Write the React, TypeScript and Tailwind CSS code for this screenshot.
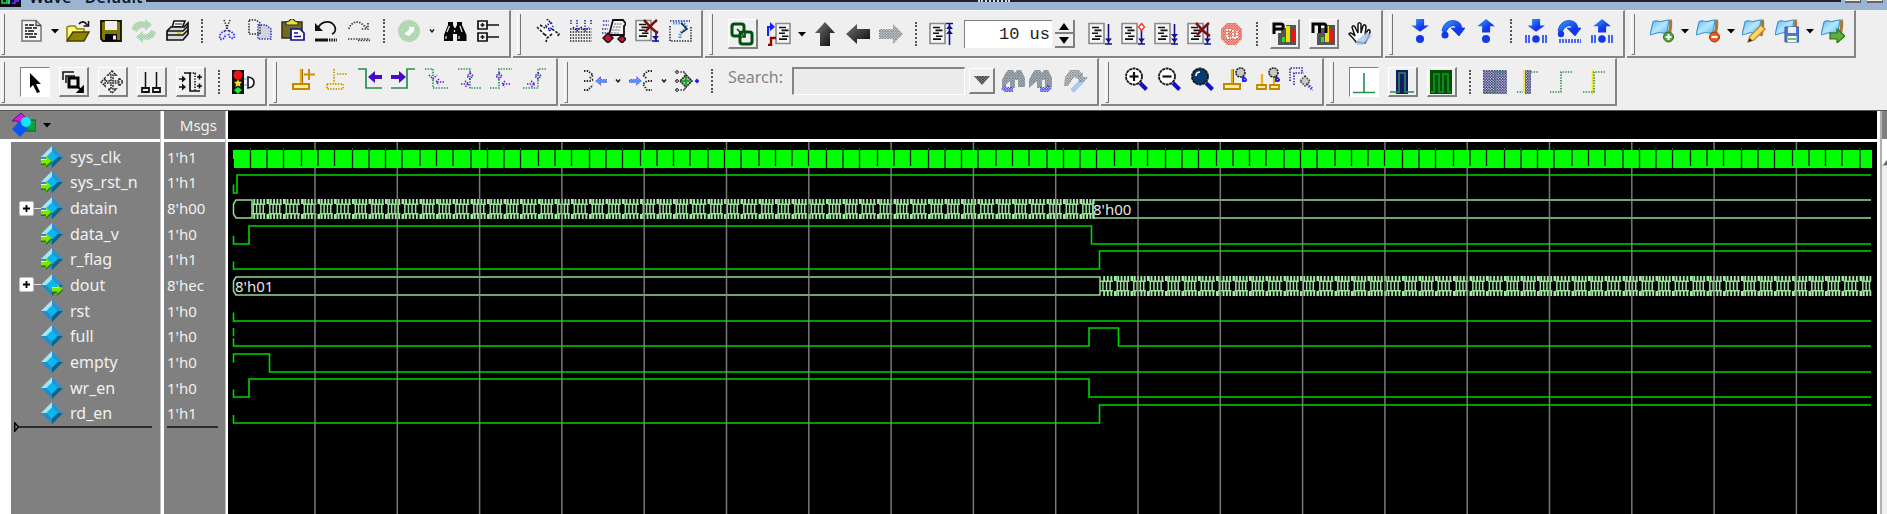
import React from "react";

type Kids = { children?: React.ReactNode };

/* ---------- toolbar building blocks ---------- */

function Pic({ children }: Kids) {
  return (
    <svg viewBox="0 0 24 24" className="h-6 w-6 shrink-0" fill="none" aria-hidden="true">
      {children}
    </svg>
  );
}

function Tool({ label, children }: Kids & { label: string }) {
  return (
    <button type="button" aria-label={label} className="flex h-6 w-[33px] shrink-0 items-center justify-center">
      <Pic>{children}</Pic>
    </button>
  );
}

function Toggle({ label, pressed = false, children }: Kids & { label: string; pressed?: boolean }) {
  return (
    <span className="flex w-[39px] shrink-0 justify-center">
      <button
        type="button"
        aria-label={label}
        aria-pressed={pressed}
        className={
          pressed
            ? "flex h-[30px] w-[30px] items-center justify-center border-t border-l border-r border-b border-t-[#808080] border-l-[#808080] border-r-white border-b-white bg-white"
            : "flex h-[30px] w-[30px] items-center justify-center border-t border-l border-r-2 border-b-2 border-t-white border-l-white border-r-[#808080] border-b-[#808080] bg-[#efefef]"
        }
      >
        <Pic>{children}</Pic>
      </button>
    </span>
  );
}

function Caret({ label, small = false }: { label: string; small?: boolean }) {
  return (
    <button type="button" aria-label={label} className="flex h-6 w-[13px] shrink-0 items-center justify-center">
      <svg viewBox="0 0 8 5" className="h-[5px] w-2" aria-hidden="true">
        {small ? <path d="M2 .5 4 3 6 .5" fill="none" stroke="#111" strokeWidth="1.4" /> : <path d="M0 0h8L4 4.6z" fill="#000" />}
      </svg>
    </button>
  );
}

function Sep() {
  return (
    <span className="flex w-[17px] shrink-0 justify-center">
      <span className="h-6 border-l-2 border-dotted border-[#555]" />
    </span>
  );
}

function Group({ label, children }: Kids & { label: string }) {
  return (
    <div
      role="toolbar"
      aria-label={label}
      className="flex h-12 shrink-0 items-start border-t border-r-2 border-b-2 border-t-white border-r-[#858585] border-b-[#858585] bg-[#efefef] pr-[5px]"
    >
      <span className="mt-[3px] mr-[10px] ml-1 h-[41px] w-1 border-r-[1px] border-b-[1px] border-l border-[#777] border-l-white" />
      <div className="mt-2 flex items-center">{children}</div>
    </div>
  );
}

/* ---------- icon parts ---------- */

const DOT = "1.4 1.3";

function Lines({ x = 4, y = 6 }: { x?: number; y?: number }) {
  return (
    <g transform={`translate(${x} ${y})`} stroke="#111" strokeWidth="1.6">
      <path d="M0 0h7M2.500 2.900h7M0 5.800h6M3 8.700h6.500M0 11.600h8" />
    </g>
  );
}

function Sheet() {
  return (
    <>
      <path d="M1 1.500h15v20H1z" fill="#f4f4f4" stroke="#8a8a8a" strokeWidth="1.600" />
      <Lines x={4} y={5.5} />
    </>
  );
}

const NAVY = "#10108c";

function RunArrow({ double = false }: { double?: boolean }) {
  return (
    <g stroke={NAVY} strokeWidth="1.600">
      <path d="M20.500 2v20M17 22h7" />
      <path d="M17 16.500h7l-3.500 4z" fill={NAVY} stroke="none" />
      {double && <path d="M17 12h7l-3.500 4z" fill={NAVY} stroke="none" />}
    </g>
  );
}

function Cross() {
  return <path d="M9 1c3 3 8 10 14 13M22 1c-4 3-8 8-12 12" stroke="#7c1010" strokeWidth="2.600" />;
}

function Scissors() {
  return (
    <>
      <path d="M9 1l5 12M15 1l-5 12" stroke="#222" strokeWidth="1.500" strokeDasharray={DOT} />
      <path d="M10 12c-4 1-6 4-5 8 3 1 5-1 5.500-5M14 12c4 1 6 4 5 7-3 1-5-1-5.500-4" stroke="#2a2af0" strokeWidth="1.900" strokeDasharray={DOT} />
    </>
  );
}

function Printer() {
  return (
    <>
      <path d="M7 9 9 2h11l-3 7z" fill="#fff" stroke="#111" strokeWidth="1.600" />
      <path d="M10 5h7M9 7.500h7" stroke="#111" />
      <path d="M2 12l4-4h13l4-4v11l-5 6H2z" fill="#d8d8d8" stroke="#111" strokeWidth="1.700" />
      <path d="M2 12h16l5-5M2 16h16l5-5" stroke="#111" strokeWidth="1.500" />
      <path d="M12 14h4" stroke="#d8c800" strokeWidth="1.800" />
    </>
  );
}

function Binoculars() {
  return (
    <>
      <path d="M5 3h5v3l1.500 3h1L14 6V3h5v3l4.500 10v6H14v-7h-4v7H1v-6L5 6z" fill="#050505" />
      <path d="M6.500 7 4 13M17 7l2 6M3 17v3M16 17v3M11.500 11v2" stroke="#e8e8e8" strokeWidth="1.200" />
    </>
  );
}

function GreyBinoculars() {
  const shape = "M4 5l3-4h5l2 3 2-3h4l4 8v9h-7v-7h-3v8H9v-7l-8 7V11z";
  return (
    <>
      <path d={shape} fill="#c4ccd4" />
      <path d={shape} fill="url(#chk-grey)" />
    </>
  );
}

function Magnifier({ sign, fill = "#fff" }: { sign?: "plus" | "minus"; fill?: string }) {
  return (
    <>
      <path d="M16 16l6.500 6.500" stroke="#1010c8" strokeWidth="4" />
      <circle cx="10" cy="9.500" r="8" fill={fill} stroke="#151515" strokeWidth="1.800" strokeDasharray="3 .6" />
      {sign && <path d="M5.500 9.500h9" stroke="#111" strokeWidth="2.200" />}
      {sign === "plus" && <path d="M10 5v9" stroke="#111" strokeWidth="2.200" />}
      {!sign && <path d="M6 9c0-3 2-4 4-4" stroke="#fff" strokeWidth="1.600" />}
    </>
  );
}

const GOLD = "#e8b010";

function CursorBase() {
  return (
    <>
      <path d="M9 2v15" stroke={GOLD} strokeWidth="2.400" />
      <path d="M10.500 2v15" stroke="#a06000" />
      <path d="M1 17h16v5H1z" fill="#fff0a0" stroke="#c48800" strokeWidth="2" />
    </>
  );
}

function MiniLens() {
  return (
    <>
      <path d="M20 9v5l3 0M21 10l3 4" stroke="#2828f0" strokeWidth="2" />
      <circle cx="17.500" cy="5.500" r="4.500" fill="#c8c8c8" stroke="#222" strokeWidth="1.600" strokeDasharray="2 .7" />
    </>
  );
}

const EDGE = "#249050";

function StepDown() {
  return <path d="M7 0h10v8h6L12 16 1 8h6z" fill="url(#blue)" transform="translate(2.500 0) scale(.8)" />;
}
function StepOver() {
  return (
    <path
      d="M1 12C2 4 9 0 15 2c4 1 5.500 4 5.800 7H24l-6 8-8-8h5c-1-4-7-3-10 4z"
      fill="url(#blue)"
      stroke="#0838d0"
      strokeWidth=".7"
    />
  );
}
function StepUp() {
  return <path d="M7 17h10V9h6L12 0 1 9h6z" fill="url(#blue)" transform="translate(2.500 0) scale(.8)" />;
}
function Bars() {
  return <path d="M2 16v8M5 16v8M19 16v8M22 16v8" stroke="#1840f0" strokeWidth="1.600" />;
}

function Flag() {
  return (
    <>
      <path d="M20 1c2 3 0 9-1 16" stroke="#a87838" strokeWidth="3.200" />
      <path d="M3 3c4-3 7 1 10-1l6-1-2 12c-4 3-7-1-10 1l-7 2z" fill="url(#sky)" stroke="#4094d0" strokeWidth="1.200" />
    </>
  );
}

function Chart({ x, y }: { x: number; y: number }) {
  return (
    <g transform={`translate(${x} ${y})`}>
      <path d="M0 8h3V3h5V0h10v20H0z" fill="#555" />
      <path d="M4 12h3v5H4z" fill="#20e020" />
      <path d="M8 1h4v16H8z" fill="#f0e000" />
      <path d="M13 4h4v13h-4z" fill="#f01010" />
    </g>
  );
}

/* ---------- signals ---------- */

type Signal = { name: string; value: string; dir: "in" | "out" | "none"; bus?: boolean };

const signals: Signal[] = [
  { name: "sys_clk", value: "1'h1", dir: "in" },
  { name: "sys_rst_n", value: "1'h1", dir: "in" },
  { name: "datain", value: "8'h00", dir: "in", bus: true },
  { name: "data_v", value: "1'h0", dir: "in" },
  { name: "r_flag", value: "1'h1", dir: "in" },
  { name: "dout", value: "8'hec", dir: "out", bus: true },
  { name: "rst", value: "1'h0", dir: "none" },
  { name: "full", value: "1'h0", dir: "none" },
  { name: "empty", value: "1'h0", dir: "none" },
  { name: "wr_en", value: "1'h0", dir: "none" },
  { name: "rd_en", value: "1'h1", dir: "none" },
];

function SignalIcon({ dir }: { dir: Signal["dir"] }) {
  return (
    <svg viewBox="0 0 22 22" className="h-[22px] w-[22px] shrink-0" aria-hidden="true">
      <path d="M11 0v5.500L5.500 11H0z" fill="#a4e6f6" />
      <path d="M11 0l11 11h-5.500L11 5.500z" fill="#2494d4" />
      <path d="M0 11h5.500l5.500 5.500V22z" fill="#1c90cc" />
      <path d="M22 11 11 22v-5.500l5.500-5.500z" fill="#08648c" />
      <path d="M11 5.500l5.500 5.500-5.500 5.500L5.500 11z" fill="#08b8f4" />
      {dir !== "none" && (
        <g transform={dir === "in" ? "translate(0 10)" : "translate(11 10)"}>
          <path d="M0 4h5V.500L11 6l-6 6V9H0z" fill="#207800" />
          <path d="M0 3h5V0l5.500 5-5.500 5V7.500H0z" fill="#7ce800" />
          <path d="M0 3.500h6" stroke="#e8ffc0" />
        </g>
      )}
    </svg>
  );
}

/* ---------- waveform drawing ---------- */

const START = 233;
const END = 1871;
const mid = (row: number) => 158 + 25.6 * row;
const high = (row: number) => Math.round(mid(row) - 9);
const low = (row: number) => Math.round(mid(row) + 9);

const phase = (k: number) => (k + 0.9) % 6.8 < 3.4;
const edges: { x: number; up: boolean }[] = [];
for (let k = 0, x = 250; x < END; k++) {
  edges.push({ x, up: phase(k) });
  x += phase(k) === phase(k + 1) ? 16.5 : 18;
}

function level(row: number, startHigh: boolean, toggles: number[]) {
  let up = startHigh;
  let d = up ? `M${START + 0.5} ${mid(row)}V${high(row)}` : `M${START + 0.5} ${mid(row) + 1}V${low(row)}`;
  for (const t of toggles) {
    up = !up;
    d += `H${t}V${up ? high(row) : low(row)}`;
  }
  return d + `H${END}`;
}

function busCells(row: number, from: number, to: number) {
  const t = high(row) - 1;
  const b = low(row) + 1;
  let ticks = "";
  let inner = "";
  const starts = edges.map((e) => e.x).filter((x) => x > from - 15 && x < to);
  starts.forEach((s, i) => {
    const width = (starts[i + 1] ?? s + 16.5) - s;
    for (let n = 0; n < 5; n++) {
      const x = s + (n * width) / 5;
      if (x >= from && x < to) {
        const w = n === 0 ? 2.8 : 1.9;
        ticks += `M${x} ${t}h${w}v5h${-w}zM${x} ${b - 5}h${w}v5h${-w}z`;
      }
      const m = x + 2.6;
      if (n < 4 && m >= from && m < to) inner += `M${m} ${t + 5}h1.500v${b - t - 10}h-1.500z`;
    }
    const l = Math.max(from, s + 2);
    const r = Math.min(to, s + width - 1);
    if (r > l) inner += `M${l} ${t + 4.5}H${r}v1.500H${l}zM${l} ${b - 6}H${r}v1.500H${l}z`;
  });
  return (
    <>
      <path d={ticks} fill="#a4eca4" />
      <path d={inner} fill="#98e098" />
    </>
  );
}

function Waves() {
  const gridLines = Array.from({ length: 19 }, (_, n) => 315 + 82.3 * n);
  const cHigh = high(0) + 1;
  const cLow = low(0) + 1;
  return (
    <svg
      viewBox="228 142 1649 372"
      className="h-[372px] w-[1649px] shrink-0"
      role="img"
      aria-label="Signal waveforms"
      fill="none"
      fontFamily='"Noto Sans", sans-serif'
      fontSize="15"
    >
      <g stroke="#00d400" strokeWidth="1.600">
        <path d={level(1, false, [237])} />
        <path d={level(3, false, [249, 1091.5])} />
        <path d={level(4, false, [1099.5])} />
        <path d={level(6, false, [])} />
        <path d={level(7, false, [1089, 1118.5])} />
        <path d={`M${START + 0.5} ${high(7)}V${mid(7) - 1}`} />
        <path d={level(8, true, [269.5])} />
        <path d={level(9, false, [249, 1089])} />
        <path d={level(10, false, [1099.5])} />
      </g>
      <g stroke="#94dc94" strokeWidth="1.500">
        <path d={`M236 ${high(2)}H252V${low(2)}H236L233.500 ${low(2) - 4}V${high(2) + 4}z`} />
        <path d={`M${END} ${high(2)}H1093V${low(2)}H${END}`} />
        <path d={`M1100 ${high(5)}H236L233.500 ${high(5) + 4}V${low(5) - 4}L236 ${low(5)}H1100z`} />
      </g>
      {busCells(2, 252, 1093)}
      {busCells(5, 1100, END)}
      <g stroke="#8c8c8c" strokeWidth="1.500" strokeOpacity=".85">
        {gridLines.map((x) => (
          <path key={x} d={`M${x} 142V514`} />
        ))}
      </g>
      <path d={`M${START} ${cHigh}H${END + 1}V${cLow}H${START + 1}v-9h-1z`} fill="#00ff00" />
      {edges.map((e, i) => (
        <g key={i}>
          <path d={e.up ? `M${e.x + 0.5} ${cHigh}V${cLow}` : `M${e.x + 0.5} ${cHigh}V${cLow - 2}`} stroke="#001c00" strokeWidth="1.300" />
          {e.up && <path d={`M${e.x} ${cHigh - 1}h1`} stroke="#00a000" strokeWidth="1.500" />}
        </g>
      ))}
      <text x="1093" y="215" fill="#e6e6e6">
        8'h00
      </text>
      <text x="235" y="292" fill="#e6e6e6">
        8'h01
      </text>
    </svg>
  );
}

function Patterns() {
  const checks: [string, string][] = [
    ["chk-green", "#88c488"],
    ["chk-grey", "#6c7680"],
    ["chk-red", "#e83820"],
    ["chk-navy", "#202070"],
    ["chk-blue", "#2828e8"],
    ["chk-dark", "#222222"],
  ];
  return (
    <svg className="absolute h-0 w-0" aria-hidden="true">
      <defs>
        {checks.map(([id, color]) => (
          <pattern key={id} id={id} width="2.700" height="2.700" patternUnits="userSpaceOnUse">
            <path d="M0 0h1.500v1.500H0zM1.350 1.350h1.500v1.500h-1.500z" fill={color} />
          </pattern>
        ))}
        <linearGradient id="blue" x1="0" y1="0" x2="1" y2="1">
          <stop offset="0" stopColor="#38a8f8" />
          <stop offset=".6" stopColor="#1438f0" />
        </linearGradient>
        <linearGradient id="sky" x1="0" y1="0" x2="1" y2="1">
          <stop offset="0" stopColor="#60b4ec" />
          <stop offset=".5" stopColor="#b4e8ff" />
          <stop offset="1" stopColor="#50b0e8" />
        </linearGradient>
        <linearGradient id="steel" x1="0" y1="0" x2="1" y2="1">
          <stop offset="0" stopColor="#777" />
          <stop offset="1" stopColor="#080808" />
        </linearGradient>
      </defs>
    </svg>
  );
}

function TopTools() {
  return (
    <div className="-ml-[3px] flex gap-0.5">
      <Group label="Standard">
        <Tool label="New">
          <path d="M2 1.500h14l5 5v15.500H2z" fill="#f6f6f6" stroke="#777" strokeWidth="1.500" />
          <path d="M16 1.500v5h5" stroke="#444" strokeWidth="1.300" />
          <path d="M5 6h3m1 0h5M5 9h7m1 0h4M5 12h2m1 0h6M5 15h8m1 0h3M5 18h3m1 0h7" stroke="#111" strokeWidth="1.600" />
        </Tool>
        <Caret label="New options" />
        <Tool label="Open">
          <path d="M1 21V8l3-1h5l2 3h7v3" fill="#fff880" stroke="#908800" strokeWidth="1.600" />
          <path d="M1 22l6-9h16l-5 9z" fill="#8c8400" stroke="#484000" strokeWidth="1.500" />
          <path d="M13 5c2-3 6-3 8 1M22.500 2v5h-5" stroke="#111" strokeWidth="1.600" />
        </Tool>
        <Tool label="Save">
          <path d="M2 2h20v20H4l-2-2z" fill="#807800" stroke="#111" strokeWidth="1.800" />
          <path d="M6 2h12v9H6z" fill="#efefef" />
          <path d="M6 15h12v7H6z" fill="#050505" />
          <path d="M14 16.500h3v4h-3z" fill="#eee" />
        </Tool>
        <Tool label="Reload">
          <path d="M0 10c1-7 8-9 13-7V0l7 6-7 6V9c-4-1-7 1-8 4zM24 13c-1 7-8 9-13 7v4l-7-6 7-6v3c4 1 7-1 8-4z" fill="url(#chk-green)" />
        </Tool>
        <Tool label="Print">
          <Printer />
        </Tool>
        <Sep />
        <Tool label="Cut">
          <Scissors />
        </Tool>
        <Tool label="Copy">
          <path d="M1 1h7l4 3v11H1z" stroke="#222" strokeWidth="1.500" strokeDasharray={DOT} />
          <path d="M10 6h8l5 4v10H10z" fill="url(#chk-navy)" fillOpacity=".25" stroke="#2828b8" strokeWidth="1.500" strokeDasharray={DOT} />
        </Tool>
        <Tool label="Paste">
          <path d="M1 3h20v16H1z" fill="#706c28" stroke="#333010" strokeWidth="1.500" />
          <path d="M5 6V3l3-1 2-2h2l2 2 3 1v3z" fill="#e8e030" stroke="#333" strokeWidth="1.200" />
          <path d="M10 10h9l4 4v7H10z" fill="#fff" stroke="#101088" strokeWidth="1.700" />
          <path d="M13 14h4M13 17.500h7" stroke="#101088" strokeWidth="1.400" />
        </Tool>
        <Tool label="Undo">
          <path d="M4 9c4-8 14-8 17-1 1 3 0 6-3 7" stroke="#111" strokeWidth="1.800" />
          <path d="M1 4v8h8z" fill="#111" />
          <path d="M1 21h13" stroke="#111" strokeWidth="3" />
          <path d="M15 21h8" stroke="#111" strokeWidth="3" strokeDasharray="1.400 1" />
        </Tool>
        <Tool label="Redo">
          <path d="M2 10c1-6 9-10 14-4l4 3M21 4v6h-7" stroke="#333" strokeWidth="1.700" strokeDasharray={DOT} />
          <path d="M1 20h22" stroke="#333" strokeWidth="1.600" strokeDasharray={DOT} />
          <path d="M11 21.500h12" stroke="#333" strokeWidth="1.400" strokeDasharray={DOT} />
        </Tool>
        <Sep />
        <Tool label="Add">
          <circle cx="12" cy="12" r="11" fill="url(#chk-green)" />
          <circle cx="12" cy="12" r="8" fill="#b0deb0" fillOpacity=".4" />
          <path d="M7 15l5-4V8h5v4l-5 5z" fill="#fff" />
        </Tool>
        <Caret label="Add options" small />
        <Tool label="Find">
          <Binoculars />
        </Tool>
        <Tool label="Expand tree">
          <path d="M2 2h9v8H2zM2 14h9v8H2z" fill="#f4f4f4" stroke="#111" strokeWidth="1.700" />
          <path d="M6.500 4v4M4.500 6h4M6.500 16v4M4.500 18h4M11 6h12M11 18h12" stroke="#111" strokeWidth="1.500" />
        </Tool>
      </Group>

      <Group label="Compile">
        <Tool label="Compile">
          <path d="M4 8l8-6 11 12-2 4-5-4-6 9-9-13z" fill="#fff" fillOpacity=".8" />
          <path d="M1 8l9 9M4 6l5 3M8 15l3 2M16 10l7 5-2 3M16 15l-5 4-1 4" stroke="#222" strokeWidth="1.700" strokeDasharray="2.800 1.300" />
          <path d="M11 0l4 4-6 3 6 4M13 12l4-5" stroke="#1818a0" strokeWidth="2" strokeDasharray={DOT} />
        </Tool>
        <Tool label="Compile all">
          <path d="M1 10h22M1 13h22M1 16h22M1 19h22M1 22h22" stroke="#222" strokeWidth="1.500" strokeDasharray={DOT} />
          <path d="M2 1v5M8 1v11M16 1v11M22 1v5M4 8l4 4 4-4M12 8l4 4 4-4" stroke="#1818a0" strokeWidth="1.500" strokeDasharray={DOT} />
        </Tool>
        <Tool label="Simulate">
          <path d="M11 1h10l3 4-2 2v9H7z" fill="#f4f4f4" stroke="#111" strokeWidth="1.800" />
          <path d="M12 5h8M11 8h8M10 11h8M9 14h8" stroke="#667" strokeWidth="1.200" strokeDasharray="2 .8" />
          <path d="M1 2h6M1 6h6M0 10h6M0 14h4" stroke="#2828a8" strokeWidth="1.300" strokeDasharray={DOT} />
          <path d="M6 14l5 5-5 5-5-5zM20 16l4 4-4 4-4-4z" fill="#d01030" stroke="#111" strokeWidth="1.500" />
        </Tool>
        <Tool label="Break">
          <Sheet />
          <Cross />
          <path d="M21 14v9M17 22h7" stroke={NAVY} strokeWidth="1.600" />
          <path d="M17 17h7l-3.500 4z" fill={NAVY} />
        </Tool>
        <Tool label="Restart">
          <path d="M2 7v15h21V7" stroke="#222" strokeWidth="1.500" strokeDasharray={DOT} />
          <path d="M2 2h20" stroke="#1818a0" strokeWidth="1.500" strokeDasharray={DOT} />
          <path d="M5 4h7c7 0 8 6 3 8-3 2-3 4-3 8" stroke="#2898f0" strokeWidth="3" strokeDasharray={DOT} />
          <path d="M13 4l6 6-6 4" stroke="#222" strokeWidth="1.500" />
        </Tool>
      </Group>

      <Group label="Simulate">
        <Toggle label="Environment">
          <rect x="2" y="2" width="12" height="12" rx="2.500" stroke="#005010" strokeWidth="3" />
          <rect x="10" y="10" width="12" height="12" rx="2.500" fill="#efefef" stroke="#005010" strokeWidth="3" />
          <path d="M7 7l8 8M15 10v5h-5" stroke="#005010" strokeWidth="1.700" />
        </Toggle>
        <Tool label="Run to source">
          <path d="M9 1.500h14v20H9z" fill="#f4f4f4" stroke="#8a8a8a" strokeWidth="1.600" />
          <Lines x={12} y={5.5} />
          <path d="M1 14V5h3" stroke="#1020ff" strokeWidth="2.200" />
          <path d="M3 0l5 5-5 4z" fill="#1020ff" />
          <path d="M1 23h3v-7h5" stroke="#900" strokeWidth="2.400" />
        </Tool>
        <Caret label="Source options" />
        <Tool label="Up">
          <path d="M12 0l10 11h-5v13H7V11H2z" fill="url(#steel)" />
        </Tool>
        <Tool label="Back">
          <path d="M0 12L11 2v5h13v10H11v5z" fill="url(#steel)" />
        </Tool>
        <Tool label="Forward">
          <path d="M24 12L14 2v5H0v10h14v5z" fill="url(#chk-grey)" />
        </Tool>
        <Sep />
        <Tool label="Restart simulation">
          <Sheet />
          <path d="M20.500 1v22M17 1.500h7" stroke={NAVY} strokeWidth="1.600" />
          <path d="M17 7l3.500-4L24 7zM17 12l3.500-4 3.500 4z" fill={NAVY} />
        </Tool>
        <div className="flex h-7 w-[126px] items-center pl-[7px]">
          <input
            aria-label="Run length"
            defaultValue="10 us"
            className="h-7 w-[88px] border-t border-l border-[#808080] bg-white pr-0.5 text-right font-['Liberation_Mono',monospace] text-[17px] text-[#222] outline-none"
          />
          <span className="ml-[3px] flex w-5 flex-col">
            <button type="button" aria-label="Increase" className="flex h-3.5 items-center justify-center border-r-2 border-b-2 border-[#808080]">
              <svg viewBox="0 0 10 7" className="h-[7px] w-2.5" aria-hidden="true">
                <path d="M5 0l5 7H0z" fill="#000" />
              </svg>
            </button>
            <button type="button" aria-label="Decrease" className="flex h-3.5 items-center justify-center border-r-2 border-b-2 border-[#808080]">
              <svg viewBox="0 0 10 7" className="h-[7px] w-2.5" aria-hidden="true">
                <path d="M0 0h10L5 7z" fill="#000" />
              </svg>
            </button>
          </span>
        </div>
        <Tool label="Run">
          <Sheet />
          <RunArrow />
        </Tool>
        <Tool label="Continue run">
          <Sheet />
          <RunArrow />
          <path d="M20.500 1.500l3 3.500-3 3.500-3-3.500z" fill="#fff" stroke="#ff3020" strokeWidth="1.400" />
        </Tool>
        <Tool label="Run all">
          <Sheet />
          <RunArrow double />
        </Tool>
        <Tool label="Stop run">
          <Sheet />
          <RunArrow />
          <Cross />
        </Tool>
        <Tool label="Halt">
          <path d="M7 1h9l6 6v10l-6 6H7l-6-6V7z" fill="url(#chk-red)" />
          <path d="M11 8H7v8h4M13 8v8h4V9" stroke="#fff" strokeWidth="1.800" strokeDasharray="2 1" />
        </Tool>
        <Sep />
        <Toggle label="Performance profiling">
          <Chart x={6} y={3} />
          <path d="M2 12V2h7c3 0 3 5 0 5H3" stroke="#050505" strokeWidth="3" />
        </Toggle>
        <Toggle label="Memory profiling">
          <Chart x={6} y={3} />
          <path d="M2 11V2h11c2 0 2 1 2 3v6M8.500 2v9" stroke="#050505" strokeWidth="3" />
        </Toggle>
        <Tool label="Pan">
          <path
            d="M8 20c-2-3-5-6-7-8 1-2 3-1 6 2L4 5c1-2 3-1 3 0l3 6V2c1-2 3-1 3 0v9l2-7c1-2 3-1 3 1l-1 8 3-5c2-1 2 1 2 2-1 4-3 8-5 11z"
            fill="#fff"
            stroke="#111"
            strokeWidth="1.500"
          />
          <path d="M19 10l5 4-9 9H9l-1-4z" fill="#a8c4ec" fillOpacity=".8" />
        </Tool>
      </Group>

      <Group label="Step">
        <Tool label="Step into">
          <StepDown />
          <circle cx="12" cy="20" r="4" fill="#1438e8" />
        </Tool>
        <Tool label="Step over">
          <StepOver />
          <circle cx="4" cy="16" r="3.500" fill="#1438e8" />
        </Tool>
        <Tool label="Step out">
          <StepUp />
          <circle cx="12" cy="20" r="4" fill="#1438e8" />
        </Tool>
        <Sep />
        <Tool label="Step into current">
          <StepDown />
          <Bars />
          <circle cx="12" cy="20" r="3.800" fill="#1438e8" />
        </Tool>
        <Tool label="Step over current">
          <StepOver />
          <circle cx="4" cy="15" r="3.200" fill="#1438e8" />
          <path d="M3 20v4M6 20v4M9 20v4M12 20v4M15 20v4M18 20v4M21 20v4M24 20v4" stroke="#1840f0" strokeWidth="1.500" />
        </Tool>
        <Tool label="Step out current">
          <StepUp />
          <Bars />
          <circle cx="12" cy="20" r="3.800" fill="#1438e8" />
        </Tool>
      </Group>

      <Group label="Bookmarks">
        <Tool label="Add bookmark">
          <Flag />
          <circle cx="18.500" cy="18" r="5" fill="#58a040" stroke="#2c6820" />
          <path d="M18.500 15v6M15.500 18h6" stroke="#fff" strokeWidth="2" />
        </Tool>
        <Caret label="Add bookmark options" />
        <Tool label="Remove bookmark">
          <Flag />
          <circle cx="18.500" cy="18" r="5" fill="#e85820" stroke="#a83008" />
          <path d="M15.500 18h6" stroke="#fff" strokeWidth="2.200" />
        </Tool>
        <Caret label="Remove bookmark options" />
        <Tool label="Edit bookmark">
          <Flag />
          <path d="M6 23l2-6L19 6l4 4-11 11z" fill="#fcd468" stroke="#c07c18" strokeWidth="1.200" />
          <path d="M6 23l1.500-4 3 2.500z" fill="#333" />
        </Tool>
        <Tool label="Save bookmark">
          <Flag />
          <path d="M10 8h14v15H10z" fill="#5078c8" stroke="#2c50a0" />
          <path d="M13 8h8v6h-8z" fill="#e8f0ff" />
          <path d="M12.500 17h9v6h-9z" fill="#f4fff0" />
          <path d="M13 20h8" stroke="#48b040" strokeWidth="1.500" />
        </Tool>
        <Caret label="Save bookmark options" />
        <Tool label="Load bookmark">
          <Flag />
          <path d="M9 14h7v-4l8 7-8 7v-4H9z" fill="#60b038" stroke="#2c7418" strokeWidth="1.200" />
        </Tool>
      </Group>
    </div>
  );
}

function BottomTools() {
  return (
    <div className="-ml-[3px] flex gap-0.5">
      <Group label="Mouse mode">
        <Toggle label="Select mode" pressed>
          <path d="M7 3l11 11h-5l4 8-3 1-4-8-3 3z" fill="#000" />
        </Toggle>
        <Toggle label="Zoom mode">
          <path d="M2 10V2h11M5 13V6h9" stroke="#111" strokeWidth="1.500" />
          <path d="M8 8h9v9H8z" stroke="#000" strokeWidth="3" />
          <path d="M16 16l5 5M22 17v5h-5z" stroke="#000" strokeWidth="1.800" fill="#000" />
        </Toggle>
        <Toggle label="Pan mode">
          <path
            d="M12 1l4 4h-3v6h6V8l4 4-4 4v-3h-6v6h3l-4 4-4-4h3v-6H5v3l-4-4 4-4v3h6V5H8z"
            stroke="#222"
            strokeWidth="1.500"
            strokeDasharray="1.800 .9"
          />
        </Toggle>
        <Toggle label="Two cursor mode">
          <path d="M6.500 2v15M17.500 2v15" stroke="#111" strokeWidth="1.500" />
          <path d="M3 18h7v4H3zM14 18h7v4h-7z" stroke="#111" strokeWidth="1.800" />
        </Toggle>
        <Toggle label="Edit mode">
          <path d="M6 3h6v18h10" stroke="#111" strokeWidth="1.700" />
          <path d="M17 3v18M12 3h6" stroke="#111" strokeWidth="1.500" strokeDasharray={DOT} />
          <path d="M1 9h5M1 17h5M19 7h5M21.500 4.500v5M19 16h5M21.500 13.500v5" stroke="#111" strokeWidth="1.600" />
          <path d="M4 5.500L8 9l-4 3.500zM4 13.500L8 17l-4 3.500z" fill="#111" />
        </Toggle>
        <Sep />
        <Tool label="Stop wave drawing">
          <path d="M0 0h12v24H0z" fill="#111" />
          <circle cx="6" cy="5" r="4.500" fill="#f01010" />
          <path d="M6 9l1 2.500 3 .5-2 2 .5 3L6 15.500 3.500 17l.5-3-2-2 3-.500z" fill="#f0e020" />
          <path d="M6 17l4 3-4 4-4-4z" fill="#20e838" />
          <path d="M16 7c8 1 8 10 0 11z" fill="#fff" stroke="#111" strokeWidth="1.600" />
          <path d="M12 9h3M12 15h3" stroke="#50b8e0" />
        </Tool>
      </Group>

      <Group label="Cursors">
        <Tool label="Insert cursor">
          <CursorBase />
          <path d="M17 2v11M12 7.500h11" stroke="#c89000" strokeWidth="2" />
        </Tool>
        <Tool label="Delete cursor">
          <path d="M9 2v14M2 17h16v5H2zM12 7h10" stroke="#d0a010" strokeWidth="2" strokeDasharray={DOT} />
        </Tool>
        <Tool label="Previous transition">
          <path d="M0 2h8v19h16" stroke={EDGE} strokeWidth="1.700" />
          <path d="M10 10l7-6v4h7v4h-7v4z" fill="#4808d0" />
        </Tool>
        <Tool label="Next transition">
          <path d="M0 21h16V2h8" stroke={EDGE} strokeWidth="1.700" />
          <path d="M15 10L8 4v4H0v4h8v4z" fill="#4808d0" />
        </Tool>
        <Tool label="Previous falling edge">
          <path d="M1 2h8v19h15" stroke={EDGE} strokeWidth="1.600" strokeDasharray={DOT} />
          <path d="M5 8l4 4 4-4M20 15h-8M15 12l-3 3 3 3" stroke="#5818d8" strokeWidth="1.600" strokeDasharray={DOT} />
        </Tool>
        <Tool label="Next falling edge">
          <path d="M1 2h12v19h11" stroke={EDGE} strokeWidth="1.600" strokeDasharray={DOT} />
          <path d="M13 6l3 3-3 3-3-3zM4 17h8M8 14l4 3-4 3" stroke="#5818d8" strokeWidth="1.600" strokeDasharray={DOT} />
        </Tool>
        <Tool label="Previous rising edge">
          <path d="M0 21h9V2h13" stroke={EDGE} strokeWidth="1.600" strokeDasharray={DOT} />
          <path d="M9 6l3 3-3 3-3-3zM20 17h-8M15 14l-3 3 3 3" stroke="#5818d8" strokeWidth="1.600" strokeDasharray={DOT} />
        </Tool>
        <Tool label="Next rising edge">
          <path d="M0 21h15V2h8" stroke={EDGE} strokeWidth="1.600" strokeDasharray={DOT} />
          <path d="M15 6l3 3-3 3-3-3zM4 17h8M8 14l4 3-4 3" stroke="#5818d8" strokeWidth="1.600" strokeDasharray={DOT} />
        </Tool>
      </Group>

      <Group label="Search">
        <Tool label="Find previous driver">
          <path d="M1 2h4l5 4-4 4M1 12h6l4-2M1 21h4l5-5" stroke="#222" strokeWidth="1.900" strokeDasharray={DOT} />
          <path d="M12 12l6-5v3h6v4h-6v3z" fill="url(#chk-blue)" />
          <path d="M13 12h10" stroke="#38a0f8" strokeWidth="1.600" />
        </Tool>
        <Caret label="Previous driver options" small />
        <Tool label="Find next driver">
          <path d="M23 2h-4l-5 4 4 4M23 12h-5l-4 3 4 6h5" stroke="#222" strokeWidth="1.900" strokeDasharray={DOT} />
          <path d="M13 12L7 7v3H0v4h7v3z" fill="url(#chk-blue)" />
          <path d="M1 12h11" stroke="#38a0f8" strokeWidth="1.600" />
        </Tool>
        <Caret label="Next driver options" small />
        <Tool label="Trace">
          <path d="M0 3h10v4M0 12h6M0 21h10v-4M2 1v4M2 10v4M2 19v4" stroke="#222" strokeWidth="1.500" strokeDasharray={DOT} />
          <path d="M11 6l6 6-6 6-6-6z" fill="#80d880" stroke="#222" strokeWidth="1.600" strokeDasharray="2 .6" />
          <path d="M11 8v8M7 12h8" stroke="#109820" strokeWidth="1.600" />
          <path d="M18 12h2M22 9.500l2.500 2.500-2.500 2.500-2.500-2.500z" fill="#2020f0" />
        </Tool>
        <Sep />
        <div className="flex h-7 w-[279px] items-center pl-2">
          <label htmlFor="search" className="w-16 pb-2 font-['Noto_Sans',sans-serif] text-base leading-5 text-[#858585]">
            Search:
          </label>
          <input id="search" className="h-7 w-[173px] border-t-2 border-l-2 border-r border-b border-t-[#858585] border-l-[#858585] border-r-white border-b-white bg-[#ebebeb] px-1 outline-none" />
          <button
            type="button"
            aria-label="Search history"
            className="ml-1 flex h-[26px] w-[26px] items-center justify-center border-t border-l border-r-2 border-b-2 border-t-white border-l-white border-r-[#808080] border-b-[#808080]"
          >
            <svg viewBox="0 0 16 9" className="h-[9px] w-4" aria-hidden="true">
              <path d="M0 0h16L8 9z" fill="url(#chk-dark)" />
              <path d="M0 0h16L8 9z" fill="#333" fillOpacity=".35" />
            </svg>
          </button>
        </div>
        <div className="flex w-[60px] items-center">
          <button type="button" aria-label="Search backward" className="flex h-6 w-[27px] items-center justify-center">
            <Pic>
              <GreyBinoculars />
              <path d="M0 20l5-5v3h7v5H4z" fill="url(#chk-blue)" />
            </Pic>
          </button>
          <button type="button" aria-label="Search forward" className="flex h-6 w-[27px] items-center justify-center">
            <Pic>
              <GreyBinoculars />
              <path d="M24 19l-5-4v3h-7v5h8z" fill="url(#chk-blue)" />
            </Pic>
          </button>
        </div>
        <Tool label="Search options">
          <path d="M1 8l5-7h9l3 4-4 5-4-2-6 9-4 0z" fill="url(#chk-grey)" />
          <path d="M8 22l10-10" stroke="#a8c8f0" strokeWidth="5" />
          <path d="M14 8l5-5v5h5l-4 5h-5z" fill="url(#chk-grey)" />
        </Tool>
      </Group>

      <Group label="Zoom">
        <Tool label="Zoom in">
          <Magnifier sign="plus" />
        </Tool>
        <Tool label="Zoom out">
          <Magnifier sign="minus" />
        </Tool>
        <Tool label="Zoom full">
          <Magnifier fill="#083c70" />
        </Tool>
        <Tool label="Zoom on cursor">
          <CursorBase />
          <MiniLens />
        </Tool>
        <Tool label="Zoom between cursors">
          <path d="M6 7v10M18 7v10" stroke={GOLD} strokeWidth="2.200" />
          <path d="M1 18h9v4H1zM14 18h9v4h-9z" fill="#fff0a0" stroke="#c48800" strokeWidth="1.800" />
          <MiniLens />
        </Tool>
        <Tool label="Zoom other window">
          <path d="M1 14V1h12v5M5 18V6h10" stroke="#2020a8" strokeWidth="1.600" strokeDasharray={DOT} />
          <path d="M18 17l6 6" stroke="#2828f0" strokeWidth="3" strokeDasharray={DOT} />
          <path d="M16 9l5 5-5 5-5-5z" fill="#c8c8c8" stroke="#333" strokeWidth="1.500" strokeDasharray={DOT} />
        </Tool>
      </Group>

      <Group label="Wave expansion">
        <Toggle label="No expansion" pressed>
          <path d="M1 22.500h22M12 3v19" stroke={EDGE} strokeWidth="1.600" />
        </Toggle>
        <Toggle label="Delta expansion">
          <path d="M6 0h12v24H6z" fill="#181868" />
          <path d="M0 22h9V3h6v19h9" stroke={EDGE} strokeWidth="1.600" />
        </Toggle>
        <Toggle label="Event expansion">
          <path d="M1 0h22v24H1z" fill="#005000" />
          <path d="M2 22h3V4h5v18h4V4h5v18h3" stroke="#109830" strokeWidth="1.600" />
        </Toggle>
        <Sep />
        <Tool label="Expand all">
          <path d="M0 0h24v24H0z" fill="url(#chk-navy)" />
          <path d="M1 22h11V2h11" stroke={EDGE} strokeWidth="1.300" strokeDasharray={DOT} />
        </Tool>
        <Tool label="Expand at cursor">
          <path d="M9 0h6v24H9z" fill="url(#chk-navy)" />
          <path d="M8 0v24" stroke="#f0e820" strokeWidth="1.600" />
          <path d="M1 22h6M15 2h8" stroke={EDGE} strokeWidth="1.600" strokeDasharray={DOT} />
        </Tool>
        <Tool label="Collapse all">
          <path d="M1 22h11V2h11" stroke={EDGE} strokeWidth="1.600" strokeDasharray={DOT} />
        </Tool>
        <Tool label="Collapse at cursor">
          <path d="M10.500 0v24" stroke="#f0e820" strokeWidth="1.600" />
          <path d="M1 22h11V2h11" stroke={EDGE} strokeWidth="1.600" strokeDasharray={DOT} />
        </Tool>
      </Group>
    </div>
  );
}

export default function App() {
  return (
    <main className="flex h-screen flex-col overflow-hidden bg-[#efefef] font-['Noto_Sans',sans-serif]">
      <Patterns />

      <header className="flex h-2.5 shrink-0 items-start overflow-hidden bg-[#9ab4d1]">
        <svg viewBox="0 0 22 7" className="mr-[7px] h-[7px] w-[22px]" aria-hidden="true">
          <path d="M0 0h21v7H0z" fill="#0c0c14" />
          <path d="M2 0v3h5V0" stroke="#20e040" strokeWidth="1.500" fill="none" />
          <path d="M9 0v4" stroke="#20c8c8" strokeWidth="2" />
          <path d="M12 3h3V1h4" stroke="#6020e0" strokeWidth="2" fill="none" />
        </svg>
        <div className="flex h-[5px] w-[117px] items-end">
          <h1 className="text-base leading-4 font-semibold whitespace-nowrap text-[#101828]">Wave - Default</h1>
        </div>
        <div className="flex h-0.5 flex-1 justify-center bg-[#20242a]">
          <span className="w-8 border-t-2 border-dotted border-[#c8d8ea]" />
        </div>
        <div className="flex gap-1.5 px-1">
          <button type="button" aria-label="Dock" className="h-[3px] w-4 border-r border-b-2 border-[#666] bg-[#efefef]" />
          <button type="button" aria-label="Close" className="h-[3px] w-4 border-r border-b-2 border-[#666] bg-[#efefef]" />
        </div>
      </header>

      <nav aria-label="Toolbars" className="shrink-0">
        <TopTools />
        <BottomTools />
      </nav>

      <section className="mt-1 flex min-h-0 flex-1 border-t border-[#555] bg-white">
        <div className="flex w-[161px] shrink-0 flex-col border-r border-[#c0c0c0]">
          <div className="mb-[3px] flex h-7 shrink-0 items-center bg-[#808080] pl-3">
            <svg viewBox="0 0 24 24" className="h-6 w-6" aria-hidden="true">
              <path d="M0 8l9-8 5 5v6H6V8z" fill="#d020e0" stroke="#601070" />
              <path d="M14 7h10v11H13z" fill="#10a040" stroke="#006020" />
              <path d="M8 8l8 8-8 8-8-8z" fill="#0858f0" />
              <circle cx="14" cy="9" r="5" fill="#10e8f8" />
            </svg>
            <span className="ml-1 flex">
              <Caret label="Column options" />
            </span>
          </div>
          <div className="ml-[11px] flex-1 bg-[#808080] pt-0.5">
            <ul className="grid h-[282px] grid-rows-11">
              {signals.map((s) => (
                <li key={s.name} className="flex items-center pl-2">
                  <span className="flex w-[22px] items-center">
                    {s.bus && (
                      <>
                        <button
                          type="button"
                          aria-label={`Expand ${s.name}`}
                          className="flex h-[15px] w-[15px] items-center justify-center rounded-xs border border-[#b8c0d0] bg-white"
                        >
                          <svg viewBox="0 0 9 9" className="h-[9px] w-[9px]" aria-hidden="true">
                            <path d="M4.500 1v7M1 4.500h7" stroke="#000" strokeWidth="1.800" />
                          </svg>
                        </button>
                        <span className="h-px flex-1 bg-[#e0e0e0]" />
                      </>
                    )}
                  </span>
                  <SignalIcon dir={s.dir} />
                  <span className="ml-[7px] text-base leading-5 text-[#f0f0f0]">{s.name}</span>
                </li>
              ))}
            </ul>
            <div className="-mt-1 flex h-2.5 items-center pr-2 pl-[3px]">
              <svg viewBox="0 0 5 10" className="h-2.5 w-[5px]" aria-hidden="true">
                <path d="M.700.700 4.500 5 .700 9.300z" fill="none" stroke="#000" strokeWidth="1.400" />
              </svg>
              <span className="h-0.5 flex-1 bg-[#2c2c2c]" />
            </div>
          </div>
        </div>

        <div className="ml-[3px] flex w-[62px] shrink-0 flex-col border-r border-[#c0c0c0] text-[15px] leading-5 text-[#f0f0f0]">
          <div className="mb-[3px] flex h-7 shrink-0 items-center justify-end bg-[#808080] pr-2">Msgs</div>
          <div className="flex-1 bg-[#808080] pt-0.5">
            <ul className="grid h-[282px] grid-rows-11">
              {signals.map((s) => (
                <li key={s.name} className="flex items-center pl-[3px]">
                  {s.value}
                </li>
              ))}
            </ul>
            <div className="-mt-1 flex h-2.5 items-center pr-[7px] pl-[3px]">
              <span className="h-0.5 flex-1 bg-[#2c2c2c]" />
            </div>
          </div>
        </div>

        <div className="ml-0.5 flex min-w-0 flex-1 flex-col overflow-hidden">
          <div className="mb-[3px] h-7 shrink-0 bg-black" />
          <div className="flex flex-1 overflow-hidden bg-black">
            <Waves />
          </div>
        </div>

        <div className="ml-[3px] flex w-[7px] shrink-0 flex-col border-l-2 border-[#b0b0b0]">
          <div className="mb-[3px] h-7 shrink-0 bg-[#808080]" />
          <div className="flex h-6 items-end justify-end border-b border-[#c0c0c0]">
            <svg viewBox="0 0 4 5" className="h-[5px] w-1" aria-hidden="true">
              <path d="M4 0v5H0z" fill="#666" />
            </svg>
          </div>
          <div className="flex-1 bg-[#efefef]" />
        </div>
      </section>
    </main>
  );
}
